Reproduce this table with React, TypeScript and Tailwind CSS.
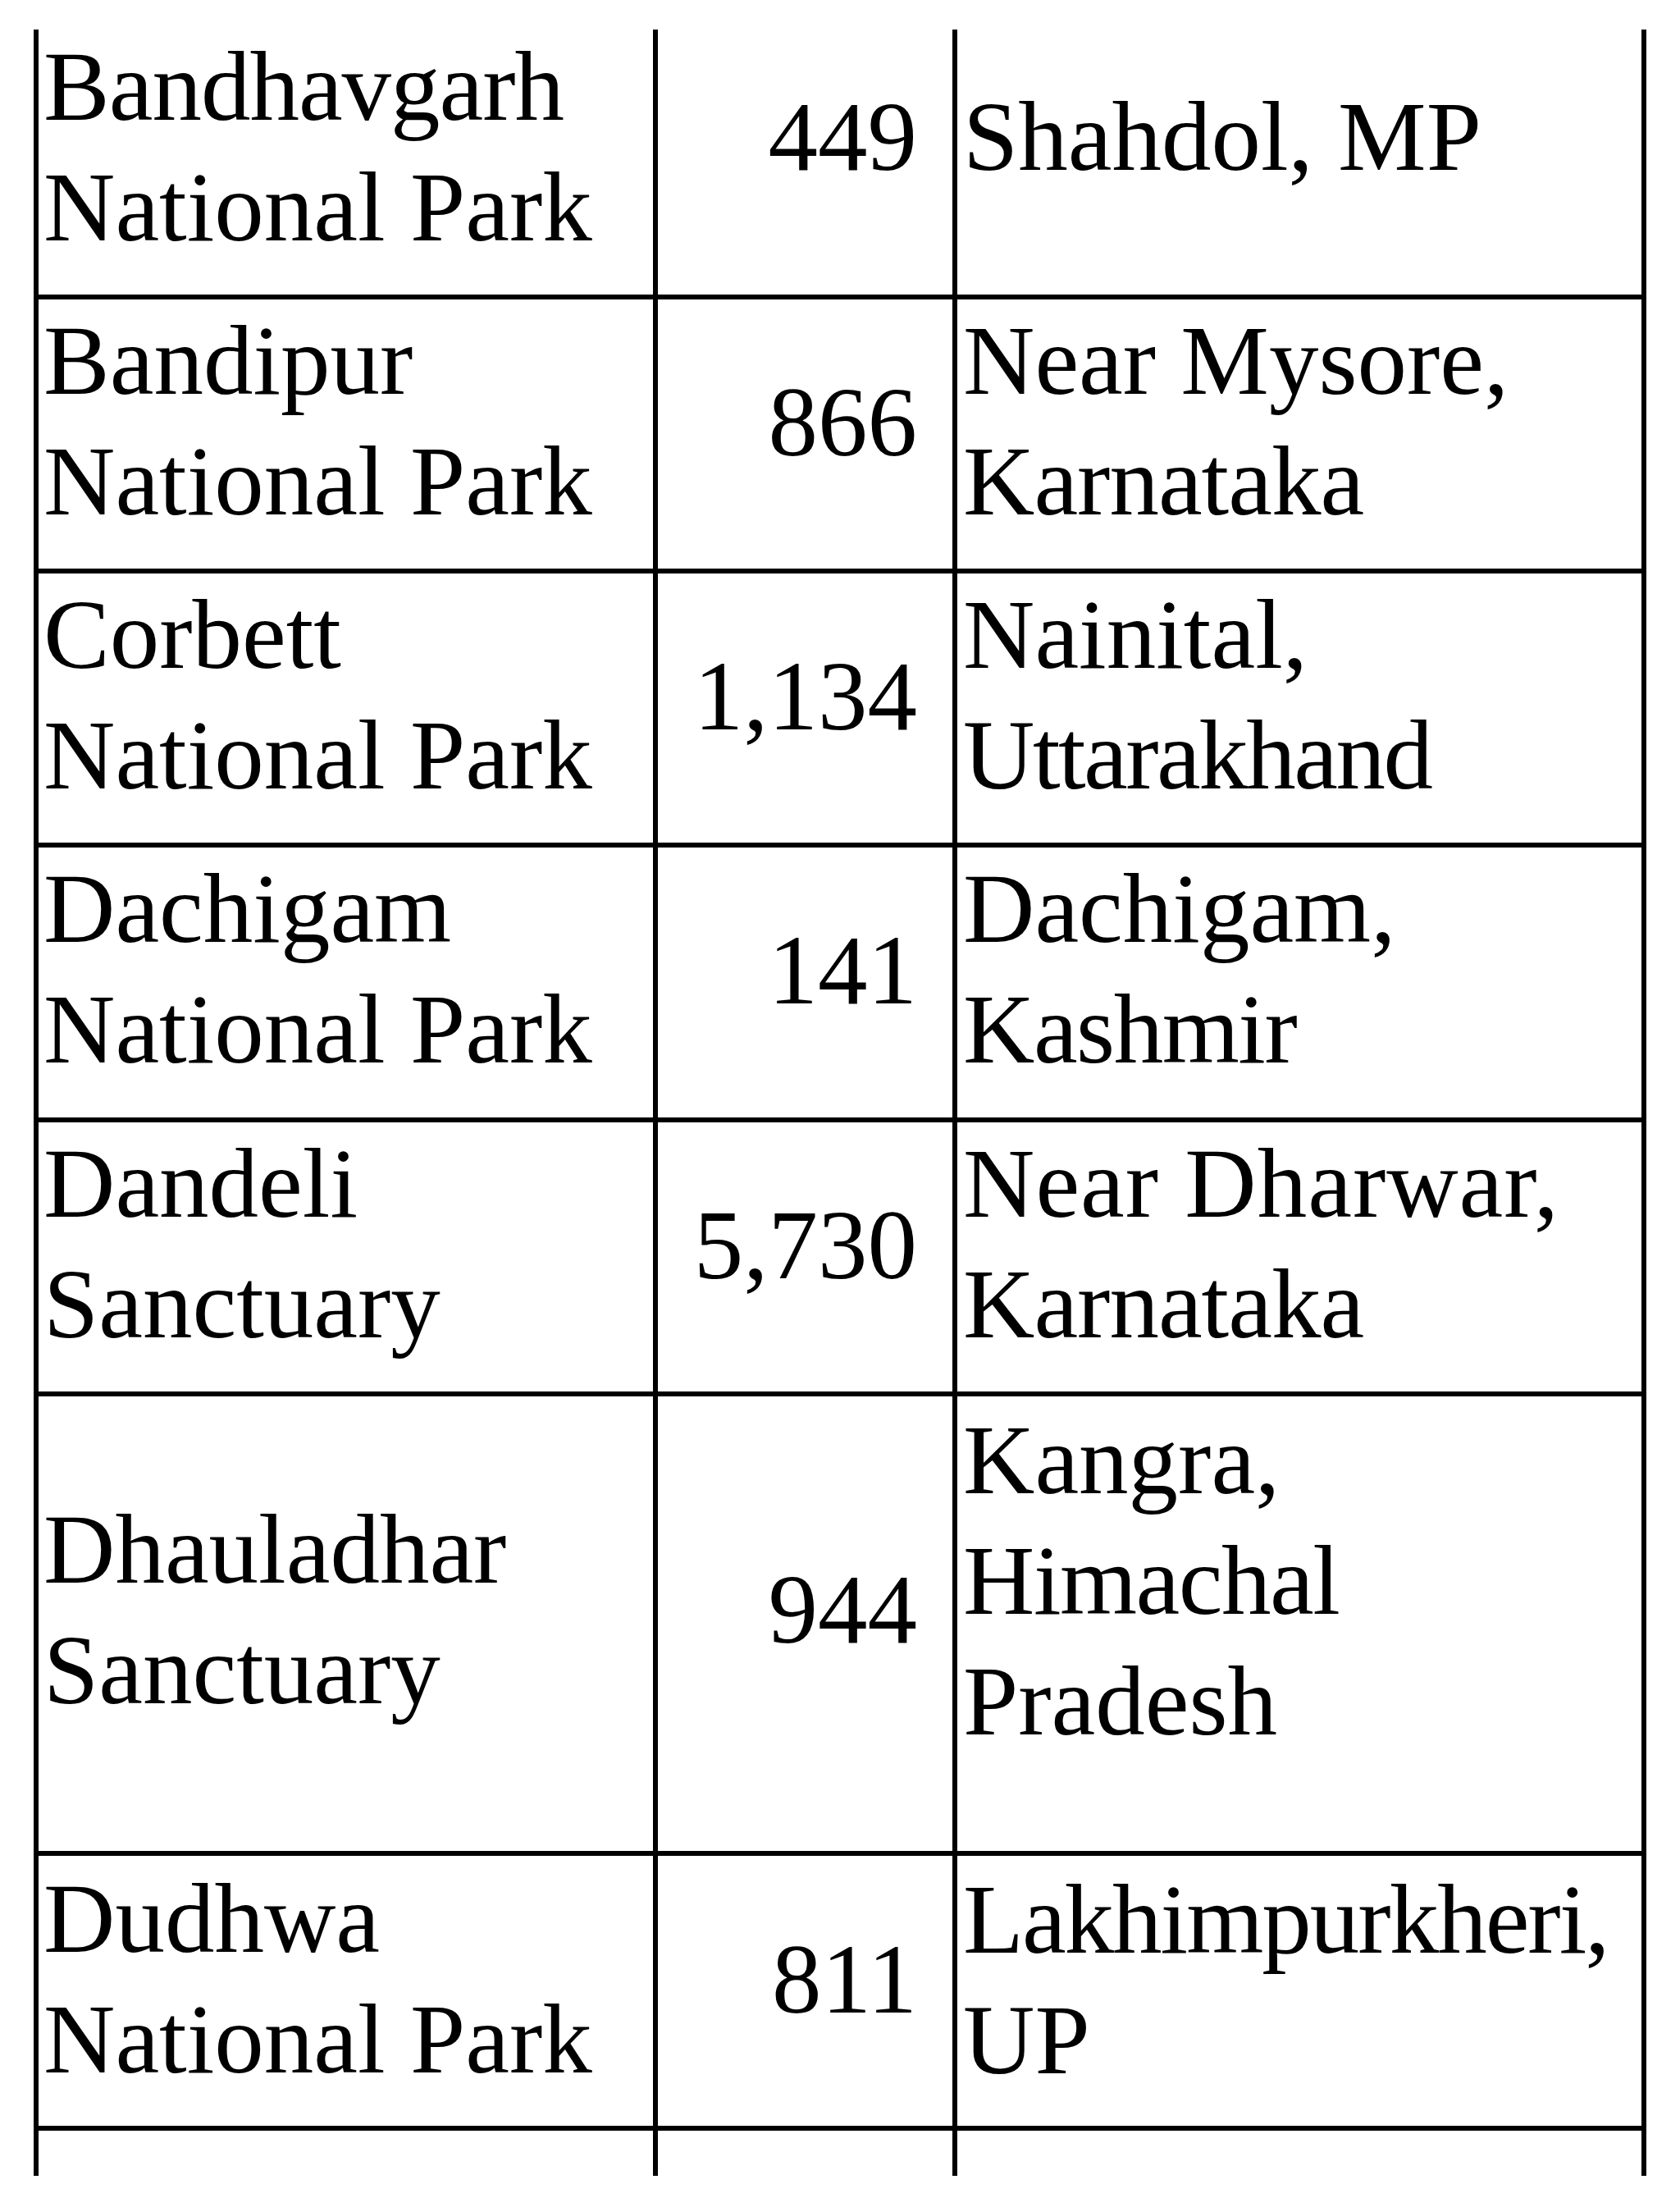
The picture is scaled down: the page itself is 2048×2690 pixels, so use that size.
type Row = {
  name: string[];
  area: string;
  place: string[];
  h: string;
  pads: [string, string, string];
};

const rows: Row[] = [
  { name: ['Bandhavgarh', 'National Park'], area: '449', place: ['Shahdol, MP'], h: 'h-[323px]', pads: ['-mt-[4px]', 'pt-[57px]', 'pt-[57px]'] },
  { name: ['Bandipur', 'National Park'], area: '866', place: ['Near Mysore,', 'Karnataka'], h: 'h-[328px]', pads: ['pt-[1px]', 'pt-[76px]', 'pt-[1px]'] },
  { name: ['Corbett', 'National Park'], area: '1,134', place: ['Nainital,', 'Uttarakhand'], h: 'h-[328px]', pads: ['pt-[1px]', 'pt-[76px]', 'pt-[1px]'] },
  { name: ['Dachigam', 'National Park'], area: '141', place: ['Dachigam,', 'Kashmir'], h: 'h-[329px]', pads: ['pt-[1px]', 'pt-[76px]', 'pt-[1px]'] },
  { name: ['Dandeli', 'Sanctuary'], area: '5,730', place: ['Near Dharwar,', 'Karnataka'], h: 'h-[328px]', pads: ['pt-[1px]', 'pt-[76px]', 'pt-[1px]'] },
  { name: ['Dhauladhar', 'Sanctuary'], area: '944', place: ['Kangra,', 'Himachal', 'Pradesh'], h: 'h-[554px]', pads: ['pt-[113px]', 'pt-[186px]', 'pt-[4px]'] },
  { name: ['Dudhwa', 'National Park'], area: '811', place: ['Lakhimpurkheri,', 'UP'], h: 'h-[329px]', pads: ['pt-[3px]', 'pt-[77px]', 'pt-[4px]'] },
];

// the source font sets a few words a touch tighter/looser than Liberation Serif
const tracking: Record<string, string> = {
  'Bandhavgarh': 'tracking-[-1px]',
  'Uttarakhand': 'tracking-[-2.5px]',
  'Lakhimpurkheri,': 'tracking-[-2px]',
  'Near Dharwar,': 'tracking-[1px]',
  'Himachal': 'tracking-[-1.5px]',
  'Kashmir': 'tracking-[-1.5px]',
  'Karnataka': 'tracking-[-1px]',
};

function Lines({ lines }: { lines: string[] }) {
  return (
    <>
      {lines.map((l) => (
        <div key={l} className={`whitespace-nowrap ${tracking[l] ?? ''}`}>
          {l}
        </div>
      ))}
    </>
  );
}

export default function App() {
  return (
    <div className="w-[2048px] h-[2690px] bg-white pt-[36px] pl-[41px] font-['Liberation_Serif','Times_New_Roman',serif] text-[121px] leading-[147px] text-black">
      <div className="w-[1966px] bg-black px-[6px] flex flex-col gap-[6px]">
        {rows.map((r) => (
          <div key={r.name[0]} className={`grid grid-cols-[749px_359px_834px] gap-x-[6px] overflow-hidden ${r.h}`}>
            <div className="bg-white pl-[6px] overflow-hidden">
              <div className={r.pads[0]}>
                <Lines lines={r.name} />
              </div>
            </div>
            <div className="bg-white pr-[43px] text-right overflow-hidden">
              <div className={r.pads[1]}>{r.area}</div>
            </div>
            <div className="bg-white pl-[7px] overflow-hidden">
              <div className={r.pads[2]}>
                <Lines lines={r.place} />
              </div>
            </div>
          </div>
        ))}
        {/* bottom stub: cut off in the source */}
        <div className="grid grid-cols-[749px_359px_834px] gap-x-[6px] h-[55px]">
          <div className="bg-white" />
          <div className="bg-white" />
          <div className="bg-white" />
        </div>
      </div>
    </div>
  );
}
